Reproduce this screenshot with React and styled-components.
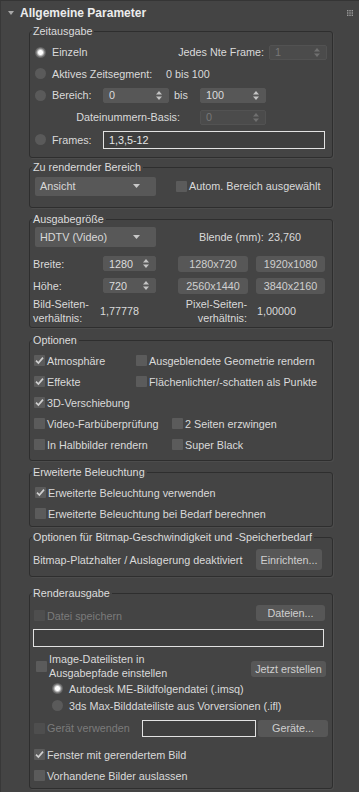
import React from 'react'
import styled, { createGlobalStyle } from 'styled-components'

const Global = createGlobalStyle`
  body {
    margin: 0;
    background: #444444;
    font-family: "Liberation Sans", Arial, sans-serif;
    font-size: 10.8px;
    color: #dadada;
  }
`

const Panel = styled.div`
  width: 359px;
  height: 792px;
  box-sizing: border-box;
  border-left: 1px solid #383838;
  border-top: 1px solid #353535;
  overflow: hidden;
`
const Header = styled.div`
  height: 23px;
  display: flex;
  align-items: center;
  padding-left: 7px;
  padding-right: 6px;
`
const HeaderTitle = styled.div`
  font-weight: bold;
  font-size: 12px;
  color: #ececec;
  margin-left: 6px;
  flex: 1;
`
const Body = styled.div`
  padding-left: 28px;
`
const Group = styled.div`
  width: 304px;
  box-sizing: border-box;
  border: 1px solid #2e2e2e;
  border-radius: 3px;
  box-shadow: 1px 1px 0 #4c4c4c;
  margin-top: ${p => p.mt}px;
  padding-bottom: ${p => p.pb}px;
`
const Legend = styled.div`
  width: fit-content;
  height: 15px;
  line-height: 15px;
  margin: -8px 0 0 2px;
  padding: 0 2px 0 1px;
  background: #444444;
  color: #dcdcdc;
  white-space: nowrap;
`
const Row = styled.div`
  display: flex;
  align-items: center;
  height: ${p => p.h}px;
  margin-top: ${p => p.mt || 0}px;
  padding-left: ${p => p.pl || 0}px;
  padding-right: ${p => p.pr || 0}px;
`
const Text = styled.div`
  width: ${p => (p.w ? p.w + 'px' : 'auto')};
  flex: none;
  margin-left: ${p => p.ml || 0}px;
  text-align: ${p => p.align || 'left'};
  color: ${p => (p.dim ? '#7b7b7b' : '#dadada')};
  line-height: 14px;
  white-space: pre;
`
const Spacer = styled.div`
  flex: 1;
`
const RadioDot = styled.span`
  width: 11px;
  height: 11px;
  border-radius: 50%;
  flex: none;
  background: ${p =>
    p.on
      ? 'radial-gradient(circle, #ffffff 0 2px, #d8d8d8 2.6px, #6e6e6e 4.5px, #5e5e5e 5.5px)'
      : '#5a5a5a'};
`
const Box = styled.span`
  width: 11px;
  height: 11px;
  flex: none;
  border-radius: 1px;
  background: ${p => (p.dim ? '#4e4e4e' : '#5b5b5b')};
  display: flex;
  align-items: center;
  justify-content: center;
`
const CheckLabel = styled.div`
  display: flex;
  align-items: center;
  gap: 2px;
  width: ${p => (p.w ? p.w + 'px' : 'auto')};
  flex: none;
  margin-left: ${p => p.ml || 0}px;
  margin-top: ${p => p.mt || 0}px;
`
const SpinBox = styled.div`
  width: ${p => p.w}px;
  height: 15px;
  flex: none;
  box-sizing: border-box;
  margin-left: ${p => p.ml || 0}px;
  background: ${p => (p.dim ? '#4b4b4b' : '#575757')};
  border: 1px solid ${p => (p.dim ? '#525252' : '#575757')};
  border-radius: 2px;
  color: ${p => (p.dim ? '#777777' : '#dcdcdc')};
  display: flex;
  align-items: center;
  padding: 0 6px 0 5px;
`
const Select = styled.div`
  width: 121px;
  height: ${p => p.h}px;
  flex: none;
  box-sizing: border-box;
  background: #585858;
  border-radius: 2px;
  display: flex;
  align-items: center;
  padding: 0 16px 0 5px;
  color: #d8d8d8;
`
const Button = styled.div`
  width: ${p => p.w}px;
  height: ${p => p.h || 16}px;
  flex: none;
  margin-left: ${p => p.ml || 0}px;
  margin-top: ${p => p.mt || 0}px;
  background: #575757;
  border-radius: 3px;
  color: #cfcfcf;
  display: flex;
  align-items: center;
  justify-content: center;
  white-space: nowrap;
`
const Field = styled.div`
  width: ${p => p.w}px;
  height: ${p => p.h}px;
  flex: none;
  box-sizing: border-box;
  margin-left: ${p => p.ml || 0}px;
  border: 1px solid #e2e2e2;
  background: #3e3e3e;
  display: flex;
  align-items: center;
  padding-left: 5px;
  color: #e6e6e6;
`
const Grip = styled.svg`
  flex: none;
`

const Radio = ({ on, children, w }) => (
  <>
    <RadioDot on={on ? 1 : 0} />
    <Text ml={6} w={w}>{children}</Text>
  </>
)

const Check = ({ on, dim, children, w, ml, mt }) => (
  <CheckLabel w={w} ml={ml} mt={mt}>
    <Box dim={dim ? 1 : 0}>
      {on && (
        <svg width="9" height="9" viewBox="0 0 9 9">
          <path d="M1 4.6 L3.4 7 L8 1.6" stroke="#cfcfcf" strokeWidth="1.7" fill="none" />
        </svg>
      )}
    </Box>
    <Text dim={dim}>{children}</Text>
  </CheckLabel>
)

const Spinner = ({ w, dim, ml, children }) => (
  <SpinBox w={w} dim={dim ? 1 : 0} ml={ml}>
    <Spacer>{children}</Spacer>
    <svg width="6" height="9" viewBox="0 0 6 9">
      <polygon points="0,3.5 3,0 6,3.5" fill={dim ? '#707070' : '#c4c4c4'} />
      <polygon points="0,5.5 3,9 6,5.5" fill={dim ? '#707070' : '#c4c4c4'} />
    </svg>
  </SpinBox>
)

const Dropdown = ({ h, children }) => (
  <Select h={h}>
    <Spacer>{children}</Spacer>
    <svg width="7" height="4" viewBox="0 0 7 4">
      <polygon points="0,0 7,0 3.5,4" fill="#c8c8c8" />
    </svg>
  </Select>
)

export default function App() {
  return (
    <>
      <Global />
      <Panel>
        <Header>
          <svg width="6" height="4" viewBox="0 0 6 4">
            <polygon points="0,0 6,0 3,4" fill="#a8a8a8" />
          </svg>
          <HeaderTitle>Allgemeine Parameter</HeaderTitle>
          <Grip width="6" height="6" viewBox="0 0 6 6">
            {[0, 2.3, 4.6].map(y =>
              [0, 2.3, 4.6].map(x => <rect key={x + '-' + y} x={x} y={y} width="1.4" height="1.4" fill="#9c9c9c" />)
            )}
          </Grip>
        </Header>
        <Body>
          <Group mt={7} pb={6}>
            <Legend>Zeitausgabe</Legend>
            <Row h={22} mt={2} pl={5} pr={5}>
              <Radio on>Einzeln</Radio>
              <Spacer />
              <Text>Jedes Nte Frame:</Text>
              <Spinner w={58} ml={5} dim>1</Spinner>
            </Row>
            <Row h={21} pl={5}>
              <Radio w={114}>Aktives Zeitsegment:</Radio>
              <Text>0 bis 100</Text>
            </Row>
            <Row h={22} pl={5}>
              <Radio w={51}>Bereich:</Radio>
              <Spinner w={66}>0</Spinner>
              <Text w={26} ml={5}>bis</Text>
              <Spinner w={66}>100</Spinner>
            </Row>
            <Row h={22}>
              <Text w={150} align="right">Dateinummern-Basis:</Text>
              <Spinner w={66} ml={20} dim>0</Spinner>
            </Row>
            <Row h={23} pl={5}>
              <Radio w={51}>Frames:</Radio>
              <Field w={222} h={18}>1,3,5-12</Field>
            </Row>
          </Group>

          <Group mt={9} pb={11}>
            <Legend>Zu rendernder Bereich</Legend>
            <Row h={20} mt={1} pl={5}>
              <Dropdown h={19}>Ansicht</Dropdown>
              <Check ml={20}>Autom. Bereich ausgewählt</Check>
            </Row>
          </Group>

          <Group mt={11} pb={1}>
            <Legend>Ausgabegröße</Legend>
            <Row h={21} mt={-1} pl={5}>
              <Dropdown h={20}>HDTV (Video)</Dropdown>
              <Text w={69} ml={43}>Blende (mm):</Text>
              <Text>23,760</Text>
            </Row>
            <Row h={17} mt={8} pl={3}>
              <Text w={70}>Breite:</Text>
              <Spinner w={53}>1280</Spinner>
              <Button w={70} h={16} ml={22}>1280x720</Button>
              <Button w={69} h={16} ml={8}>1920x1080</Button>
            </Row>
            <Row h={17} mt={5} pl={3}>
              <Text w={70}>Höhe:</Text>
              <Spinner w={53}>720</Spinner>
              <Button w={70} h={16} ml={22}>2560x1440</Button>
              <Button w={69} h={16} ml={8}>3840x2160</Button>
            </Row>
            <Row h={30} mt={2} pl={3}>
              <Text w={67}>{'Bild-Seiten-\nverhältnis:'}</Text>
              <Text w={78}>1,77778</Text>
              <Text w={69} align="right">{'Pixel-Seiten-\nverhältnis:'}</Text>
              <Text ml={10}>1,00000</Text>
            </Row>
          </Group>

          <Group mt={12} pb={5}>
            <Legend>Optionen</Legend>
            <Row h={21} mt={2} pl={4}>
              <Check on w={102}>Atmosphäre</Check>
              <Check>Ausgeblendete Geometrie rendern</Check>
            </Row>
            <Row h={21} pl={4}>
              <Check on w={102}>Effekte</Check>
              <Check>Flächenlichter/-schatten als Punkte</Check>
            </Row>
            <Row h={21} pl={4}>
              <Check on>3D-Verschiebung</Check>
            </Row>
            <Row h={21} pl={4}>
              <Check w={138}>Video-Farbüberprüfung</Check>
              <Check>2 Seiten erzwingen</Check>
            </Row>
            <Row h={21} pl={4}>
              <Check w={138}>In Halbbilder rendern</Check>
              <Check>Super Black</Check>
            </Row>
          </Group>

          <Group mt={11} pb={2}>
            <Legend>Erweiterte Beleuchtung</Legend>
            <Row h={21} mt={2} pl={5}>
              <Check on>Erweiterte Beleuchtung verwenden</Check>
            </Row>
            <Row h={21} pl={5}>
              <Check>Erweiterte Beleuchtung bei Bedarf berechnen</Check>
            </Row>
          </Group>

          <Group mt={10} pb={5}>
            <Legend>Optionen für Bitmap-Geschwindigkeit und -Speicherbedarf</Legend>
            <Row h={23} mt={3} pl={3}>
              <Text w={223}>Bitmap-Platzhalter / Auslagerung deaktiviert</Text>
              <Button w={66} h={21}>Einrichten...</Button>
            </Row>
          </Group>

          <Group mt={16} pb={2}>
            <Legend>Renderausgabe</Legend>
            <Row h={22} mt={1} pl={4} pr={7}>
              <Check dim mt={5}>Datei speichern</Check>
              <Spacer />
              <Button w={69} h={16}>Dateien...</Button>
            </Row>
            <Row h={18} mt={5} pl={3}>
              <Field w={291} h={18} />
            </Row>
            <Row h={28} mt={5} pl={6} pr={6}>
              <Check>{'Image-Dateilisten in\nAusgabepfade einstellen'}</Check>
              <Spacer />
              <Button w={75} h={16} mt={6}>Jetzt erstellen</Button>
            </Row>
            <Row h={17} pl={22}>
              <Radio on>Autodesk ME-Bildfolgendatei (.imsq)</Radio>
            </Row>
            <Row h={17} pl={22}>
              <Radio>3ds Max-Bilddateiliste aus Vorversionen (.ifl)</Radio>
            </Row>
            <Row h={20} mt={4} pl={4}>
              <Check dim w={108}>Gerät verwenden</Check>
              <Field w={114} h={17} />
              <Button w={70} h={17} ml={2}>Geräte...</Button>
            </Row>
            <Row h={21} mt={6} pl={4}>
              <Check on>Fenster mit gerendertem Bild</Check>
            </Row>
            <Row h={21} pl={4}>
              <Check>Vorhandene Bilder auslassen</Check>
            </Row>
          </Group>
        </Body>
      </Panel>
    </>
  )
}
